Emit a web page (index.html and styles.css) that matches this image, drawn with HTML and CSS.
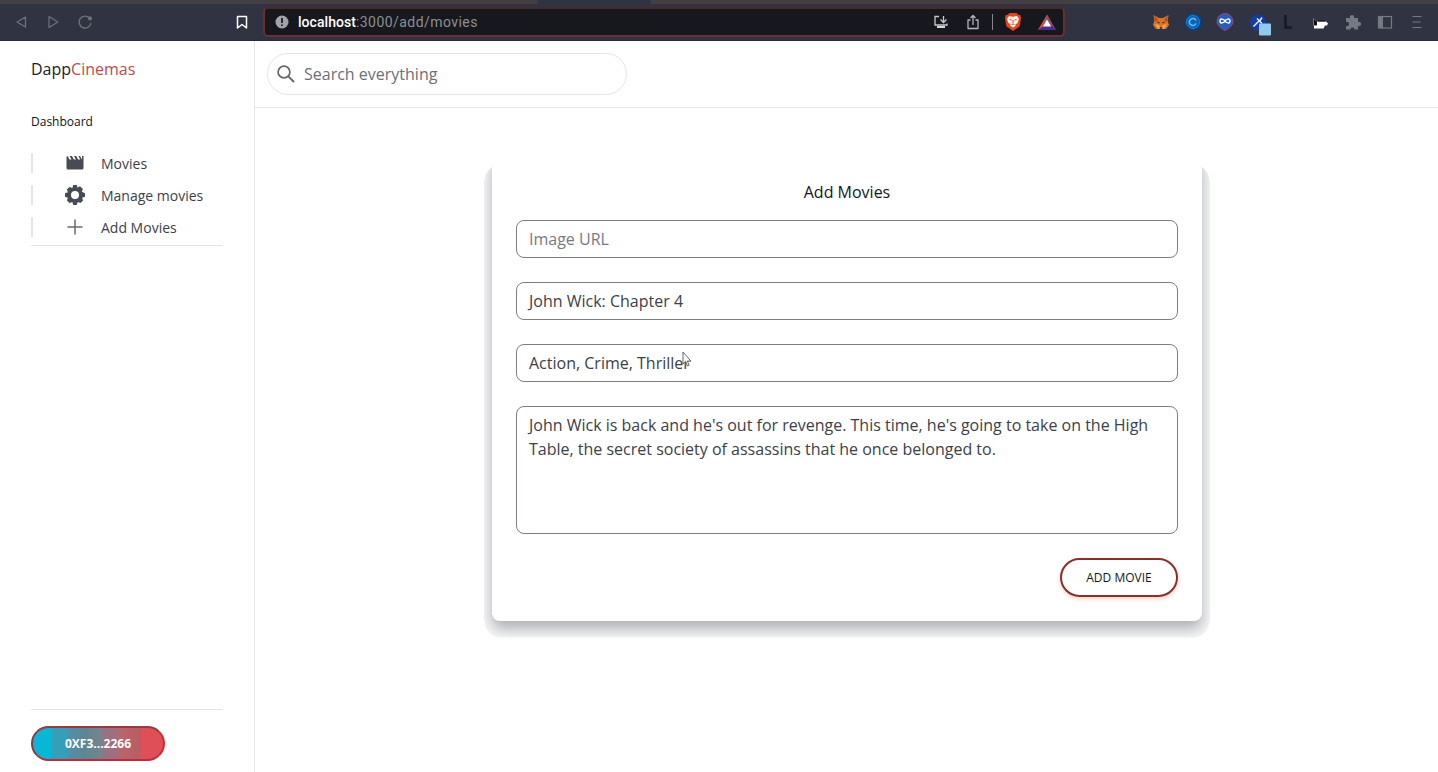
FILE: index.html
```html
<!DOCTYPE html>
<html lang="en">
<head>
<meta charset="utf-8">
<title>DappCinemas</title>
<link rel="stylesheet" href="styles.css">
</head>
<body>
<div class="browser">
  <div class="tabstrip"><span class="active-tab"></span></div>
  <div class="toolbar">
    <div class="nav-icons">
      <svg class="ico" viewBox="0 0 16 16"><path d="M12.500 3v10L4 8z" fill="none" stroke="#71737c" stroke-width="1.200" stroke-linejoin="round"/></svg>
      <svg class="ico" viewBox="0 0 16 16"><path d="M4 2.500v11L12.800 8z" fill="none" stroke="#71737c" stroke-width="1.200" stroke-linejoin="round"/></svg>
      <svg class="ico" viewBox="0 0 16 16"><path d="M12.500 4A6 6 0 1 0 14 9" fill="none" stroke="#71737c" stroke-width="1.300"/><path d="M10.500 5h3.500V2z" fill="#71737c"/><circle cx="13" cy="4.500" r="2" fill="#71737c"/></svg>
    </div>
    <svg class="ico" viewBox="0 0 16 16"><path d="M3.500 2.500h9v11.500L8 10.500 3.500 14z" fill="none" stroke="#fff" stroke-width="1.500" stroke-linejoin="round"/></svg>
    <div class="address">
      <svg class="info" viewBox="0 0 14 14"><circle cx="7" cy="7" r="6.500" fill="#a3a4a7"/><path d="M7 3v5M7 9.500v1.600" stroke="#17181d" stroke-width="1.700"/></svg>
      <div class="url"><b>localhost</b>:3000/add/movies</div>
      <div class="address-actions">
        <svg class="ico" viewBox="0 0 16 16"><path d="M6 2.500H2V11h12V9.500M10.500 2v6M7.500 5.500l3 3 3-3" fill="none" stroke="#c9c9cb" stroke-width="1.300"/><path d="M4 13h8" stroke="#d8d8d8" stroke-width="2"/></svg>
        <svg class="ico" viewBox="0 0 16 16"><path d="M5.500 6H3v8.500h10V6h-2.500M8 11V1.500M5.500 4L8 1.500 10.500 4" fill="none" stroke="#b5b6b9" stroke-width="1.300" stroke-linejoin="round"/></svg>
        <span class="divider"></span>
        <svg class="brave" viewBox="0 0 18 20"><path d="M5.500 1h7l1.600 1.800 2.100.3.800 2.900-1.300 8.300L9 19l-6.700-4.700L1 6l.8-2.900 2.100-.3z" fill="#e4471f"/><path d="M5 4l4 .8L13 4l2 3-1.500 4-2 1.500V14L9 15.500 6.500 14v-1.500l-2-1.500L3 7z" fill="#fff3ec"/><path d="M5.500 7.500l2 .6M12.500 7.500l-2 .6M9 8v3M7.500 12.500L9 12l1.500.5" fill="none" stroke="#e4471f" stroke-width="1"/></svg>
        <svg class="rewards" viewBox="0 0 18 17"><path d="M9 .5L13 8H8L5 11 0 16z" fill="#c9503f"/><path d="M9 .5L18 16l-7-4-3-6z" fill="#8b4c68"/><path d="M0 16l5-5h8l5 5z" fill="#4b2c8c"/><path d="M0 16L4.500 8.500 7 11z" fill="#dc4532"/><path d="M9 5.500l4.200 7H4.800z" fill="#fff"/></svg>
      </div>
    </div>
    <div class="extensions">
      <svg class="ico" viewBox="0 0 16 16"><path d="M.5 1l5.500 3h4l5.500-3-.8 6L16 11l-3 4H3l-3-4 1.300-4z" fill="#dc7427"/><path d="M1 1l4 5-3 2zM15 1l-4 5 3 2z" fill="#b34f22"/><path d="M2 10l4 1 2 3 2-3 4-1-3 5H5z" fill="#f0a15c"/><path d="M4.500 8.200l2 .8M11.500 8.200l-2 .8" stroke="#482b23" stroke-width="1.300"/><path d="M6.500 13h3l-.5 2H7z" fill="#553a31"/></svg>
      <svg class="ext-round" viewBox="0 0 18 18"><circle cx="9" cy="9" r="8.500" fill="#0a4180"/><circle cx="9" cy="9" r="6.500" fill="#0b62b4" stroke="#1684d5"/><path d="M12 7.500a3.500 3.500 0 1 0 0 3" fill="none" stroke="#5fbcff" stroke-width="1.600"/></svg>
      <svg class="ext-round" viewBox="0 0 18 18"><path d="M9 .5a8 8 0 0 1 8 8c0 4-4 7-8 9-4-2-8-5-8-9a8 8 0 0 1 8-8z" fill="#245ec4" stroke="#a04767"/><path d="M9 8C8 6 4 5 4 8s4 2 5 0 5-3 5 0-4 2-5 0z" fill="none" stroke="#fff" stroke-width="1.500"/></svg>
      <svg class="ext-badge" viewBox="0 0 22 22"><circle cx="9" cy="8.500" r="8" fill="#153d9f"/><path d="M4.500 12.500l6-6M8 4.500l5 5M11 6.500l2-3" stroke="#e3eeff" stroke-width="1.500"/><rect x="10" y="9.500" width="12" height="12" rx="1" fill="#90caf0"/></svg>
      <svg class="ico" viewBox="0 0 16 16"><path d="M4.500 1v12.500H11" fill="none" stroke="#151b22" stroke-width="2.600"/></svg>
      <svg class="ico" viewBox="0 0 16 16"><path d="M0 4l3 2 1 4-4 2z" fill="#b86528"/><path d="M1 5l3 3v3H1z" fill="#111"/><path d="M4 7.500h9l2 2-1 2h-2l-1.500 3H1v-3h3z" fill="#fff"/><path d="M5 7h7" stroke="#111"/></svg>
      <svg class="ico" viewBox="0 0 16 16"><path d="M1 4h4a2.200 2.200 0 1 1 4 0h4v4a2.200 2.200 0 1 1 0 4v3.500H9.500a2 2 0 1 0-4 0H1V12a2.200 2.200 0 1 0 0-4z" fill="#777982"/></svg>
      <svg class="ico" viewBox="0 0 16 16"><rect x="1.500" y="2.500" width="13" height="11.500" fill="none" stroke="#777982" stroke-width="1.200"/><path d="M2 3h4v11H2z" fill="#777982"/></svg>
      <svg class="ico" viewBox="0 0 16 16"><path d="M3.500 2.500h9M3.500 8h8M3.500 13.500h9" stroke="#777982" stroke-width="1.200"/></svg>
    </div>
  </div>
</div>
<div class="app">
  <aside class="sidebar">
    <div class="logo">Dapp<span class="accent">Cinemas</span></div>
    <div class="section">Dashboard</div>
    <nav class="menu">
      <a class="item"><svg class="menu-icon" viewBox="0 0 20 20"><path d="M1.500 4Q1.500 3 2.500 3l2 3.500h2L4.700 3h2.200l2 3.500h2L9 3h2.200l2 3.500h2L13.400 3H15l2 3.500V3h1.500v12q0 1.500-1.500 1.500H3Q1.500 16.500 1.500 15z" fill="#484b54"/></svg>Movies</a>
      <a class="item"><svg class="menu-icon" viewBox="0 0 20 20"><path fill-rule="evenodd" d="M8.300 0h3.400l.8 2.400 2.500-1.200L17.900 4l-1.100 2.700L20 8.300v3.400l-2.900 1 1 2.800-2.600 2.600-2.700-1L11.700 20H8.300l-1-2.900-2.800 1-2.600-2.600 1-2.800L0 11.700V8.300l2.900-1-1-2.800 2.600-2.600 2.800 1zM10 6a4 4 0 1 0 0 8 4 4 0 0 0 0-8z" fill="#484b54"/></svg>Manage movies</a>
      <a class="item"><svg class="menu-icon" viewBox="0 0 20 20"><path d="M10 2.500v15M2.500 10h15" stroke="#696b70" stroke-width="1.500"/></svg>Add Movies</a>
    </nav>
    <div class="wallet"><button class="wallet-button">0XF3...2266</button></div>
  </aside>
  <main class="main">
    <header class="header">
      <div class="search">
        <svg class="search-icon" viewBox="0 0 18 18"><circle cx="7" cy="7" r="5.900" fill="none" stroke="#62656b" stroke-width="1.700"/><path d="M11.300 11.300L17 17" stroke="#62656b" stroke-width="1.900"/></svg>
        <span>Search everything</span>
      </div>
    </header>
    <section class="card">
      <h1 class="title">Add Movies</h1>
      <div class="field placeholder">Image URL</div>
      <div class="field">John Wick: Chapter 4</div>
      <div class="field with-cursor">Action, Crime, Thriller
        <svg class="cursor" viewBox="0 0 10 17"><path d="M1 1v12l2.600-2.300L5.500 15l1.700-.8-1.900-4H9z" fill="#fff" fill-opacity=".8" stroke="#555860" stroke-width=".9"/></svg>
      </div>
      <div class="field area">John Wick is back and he's out for revenge. This time, he's going to take on the High Table, the secret society of assassins that he once belonged to.</div>
      <div class="actions"><button class="submit">ADD MOVIE</button></div>
    </section>
  </main>
</div>
</body>
</html>
```
FILE: styles.css
```css
* { box-sizing: border-box; }
body { margin: 0; height: 772px; display: flex; flex-direction: column; overflow: hidden; background: #fff; color: #3d4048; font-family: "Open Sans", "Noto Sans", sans-serif; font-size: 16px; }
svg { display: block; flex: none; }
.browser { height: 41px; flex: none; background: #303341; border-bottom: 1px solid #292c38; }
.tabstrip { height: 4px; background: #443f43; padding-left: 538px; }
.active-tab { display: block; width: 113px; height: 4px; background: #303341; }
.toolbar { height: 36px; display: flex; align-items: center; padding: 0 13px; }
.ico { width: 16px; height: 16px; }
.nav-icons { display: flex; gap: 16px; margin-right: 141px; }
.address { width: 802px; height: 30px; margin-left: 13px; padding: 0 7px 0 10px; display: flex; align-items: center; background: #17181d; border: 2px solid #6b302d; border-top-color: #4b2928; border-radius: 5px; }
.info { width: 14px; height: 14px; }
.url { margin-left: 9px; font: 14px/20px Roboto, sans-serif; letter-spacing: .44px; color: #8d8f94; }
.url b { font-weight: 500; color: #fff; letter-spacing: .05px; }
.address-actions { margin-left: auto; display: flex; align-items: center; }
.address-actions .ico + .ico { margin-left: 16px; }
.divider { width: 1px; height: 16px; margin: 0 11px; background: #86878a; }
.brave { width: 18px; height: 20px; }
.rewards { width: 18px; height: 17px; margin-left: 16px; }
.extensions { margin-left: auto; display: grid; grid-template-columns: repeat(9, 16px); gap: 16px; align-items: center; }
.ext-round { width: 18px; height: 18px; margin-left: -1px; }
.ext-badge { width: 22px; height: 22px; margin: 5px -6px 0 0; }
.app { flex: 1; display: flex; }
.sidebar { width: 255px; padding: 16px 31px 11px; border-right: 1px solid #e7e7e8; display: flex; flex-direction: column; }
.logo { font-size: 16px; line-height: 24px; color: #202127; }
.accent { color: #bd4b4b; }
.section { margin-top: 31px; font-size: 12px; line-height: 20px; color: #111217; }
.menu { margin-top: 16px; border-bottom: 1px solid #e5e5e6; display: flex; flex-direction: column; gap: 12px; padding: 5px 0 8px; }
.item { height: 20px; padding-left: 32px; border-left: 2px solid #e5e5e6; display: flex; align-items: center; font-size: 14px; }
.menu-icon { width: 20px; height: 20px; margin-right: 16px; }
.wallet { margin-top: auto; border-top: 1px solid #e5e5e6; padding-top: 16px; }
.wallet-button { display: block; width: 134px; height: 35px; border: 2px solid #a9343d; border-color: #963b43 #c92b35 #b92d3d #813c49; border-radius: 18px; background: linear-gradient(90deg, #08b6d5 14%, #369fb8 15%, #369fb8 26%, #528eaa 27%, #5d8794 40%, #74848d 52%, #937582 54%, #a36d7d 65%, #b9656c 67%, #b95d62 82%, #df4f57 83%); color: #fff; font: 700 12px/20px "Open Sans", sans-serif; padding: 0; }
.main { flex: 1; min-width: 0; }
.header { height: 67px; padding: 12px; border-bottom: 1px solid #e7e7e8; }
.search { width: 360px; height: 42px; border: 1px solid #e5e5e6; border-radius: 21px; padding-left: 9px; display: flex; align-items: center; gap: 9px; color: #6c6f76; }
.search-icon { width: 18px; height: 18px; }
.card { width: 710px; height: 465px; margin: 48px 0 0 237px; padding: 24px; background: #fff; border-radius: 8px; box-shadow: 0 8px 14px rgba(35, 40, 52, .34), 0 8px 0 8px rgba(35, 40, 52, .035); display: flex; flex-direction: column; clip-path: inset(7px -8px -18px -8px round 20px); }
.title { margin: 0 0 16px; font-size: 16px; line-height: 24px; font-weight: 400; text-align: center; color: #15161b; }
.field { height: 38px; margin-bottom: 24px; padding: 6px 12px; border: 1px solid #7b7d87; border-radius: 8px; line-height: 24px; }
.placeholder { color: #777982; }
.with-cursor { position: relative; }
.cursor { position: absolute; left: 165px; top: 6px; width: 10px; height: 17px; }
.area { height: 128px; }
.actions { display: flex; justify-content: flex-end; }
.submit { width: 118px; height: 39px; border: 2px solid #86312b; border-radius: 20px; background: #fff; color: #15161b; font: 12px/20px "Open Sans", sans-serif; padding: 0; box-shadow: 0 2px 4px rgba(235, 80, 55, .28); }
```
